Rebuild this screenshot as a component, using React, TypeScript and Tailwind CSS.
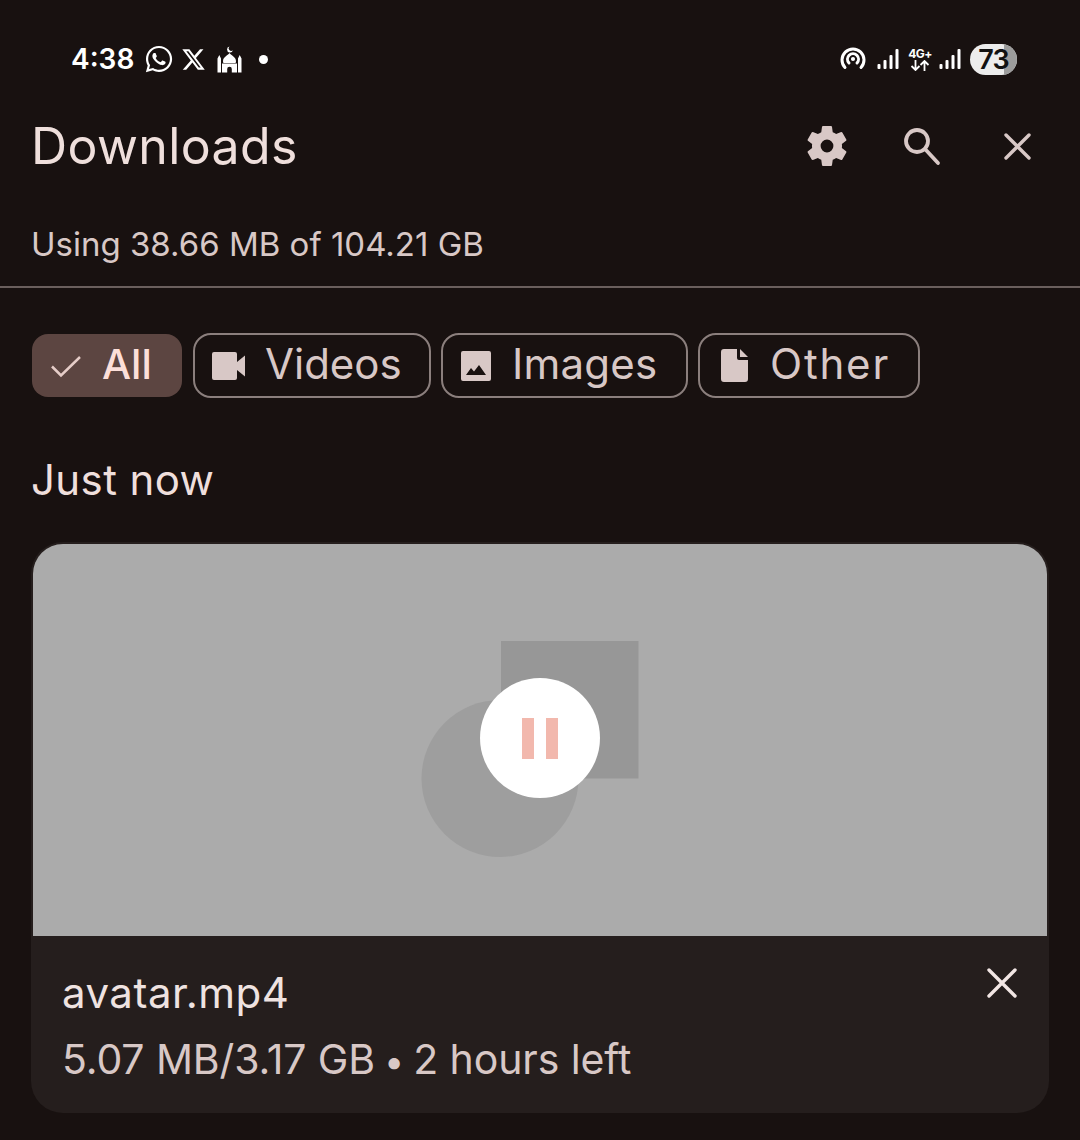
import { FaWhatsapp, FaXTwitter } from "react-icons/fa6";

const GEAR =
  "M19.43 12.98c.04-.32.07-.64.07-.98s-.03-.66-.07-.98l2.11-1.65c.19-.15.24-.42.12-.64l-2-3.46c-.12-.22-.39-.3-.61-.22l-2.49 1c-.52-.4-1.08-.73-1.69-.98l-.38-2.65C14.46 2.18 14.25 2 14 2h-4c-.25 0-.46.18-.49.42l-.38 2.65c-.61.25-1.17.59-1.69.98l-2.49-1c-.23-.09-.49 0-.61.22l-2 3.46c-.13.22-.07.49.12.64l2.11 1.65c-.04.32-.07.65-.07.98s.03.66.07.98l-2.11 1.65c-.19.15-.24.42-.12.64l2 3.46c.12.22.39.3.61.22l2.49-1c.52.4 1.08.73 1.69.98l.38 2.65c.03.24.24.42.49.42h4c.25 0 .46-.18.49-.42l.38-2.65c.61-.25 1.17-.59 1.69-.98l2.49 1c.23.09.49 0 .61-.22l2-3.46c.12-.22.07-.49-.12-.64l-2.11-1.65zM12 15.2a3.2 3.2 0 1 1 0-6.4 3.2 3.2 0 0 1 0 6.4z";

function Signal() {
  return (
    <svg width="22" height="22" viewBox="0 0 22 22" fill="#fff">
      <rect x="0.5" y="16" width="3" height="5" rx="1" />
      <rect x="6.5" y="12" width="3" height="9" rx="1" />
      <rect x="12.5" y="7" width="3" height="14" rx="1" />
      <rect x="18.5" y="1" width="3" height="20" rx="1" />
    </svg>
  );
}

function Mosque() {
  return (
    <svg width="25" height="27" viewBox="0 0 25 27" fill="#fff">
      <path d="M12.500 0.500a3 3 0 1 0 3.400 3.800 2.400 2.400 0 1 1-3.400-3.800z" />
      <path d="M12.500 7c1 2.200 6.500 3.600 6.500 8.200 0 .9-.2 1.500-.5 1.800H6.500c-.3-.3-.5-.9-.5-1.800C6 10.600 11.500 9.200 12.500 7z" />
      <path d="M5 17.500h15V26.500h-5.200v-3.500a2.300 2.300 0 0 0-4.600 0v3.500H5z" />
      <path d="M2.300 9L4 12.500v14H.5v-14zM22.700 9l1.800 3.500v14H21v-14z" />
    </svg>
  );
}

function Hotspot() {
  return (
    <svg width="26" height="26" viewBox="0 0 26 26" fill="none" stroke="#fff" strokeWidth="3" strokeLinecap="round">
      <path d="M5 21.500a11 11 0 1 1 16 0" />
      <path d="M9 17a5.500 5.500 0 1 1 8 0" />
      <circle cx="13" cy="13" r="1.300" fill="#fff" strokeWidth="1.500" />
    </svg>
  );
}

function Arrows() {
  return (
    <svg width="20" height="11" viewBox="0 0 20 11" fill="none" stroke="#fff" strokeWidth="1.800">
      <path d="M5.500 0v10M1.500 6l4 4 4-4" />
      <path d="M14.500 11V1M10.500 5l4-4 4 4" />
    </svg>
  );
}

function Chip({ label, icon, cls, textCls }: { label: string; icon: React.ReactNode; cls: string; textCls: string }) {
  return (
    <div className={`flex h-[65px] items-center rounded-[18px] border-2 border-[#8b7f7d] text-[#d8c8c6] ${cls}`}>
      {icon}
      <span className={`pb-[3px] text-[42px] leading-none ${textCls}`}>{label}</span>
    </div>
  );
}

export default function App() {
  return (
    <div className="flex h-[1140px] w-[1080px] flex-col overflow-hidden bg-[#181110] font-['Inter','Noto_Sans',sans-serif]">
      {/* status bar */}
      <div className="flex h-[118px] items-start justify-between pl-[71px] pr-[63px] pt-[41px] text-white">
        <div className="flex h-[36px] items-center">
          <span className="text-[28px] font-semibold leading-none">4:38</span>
          <FaWhatsapp className="ml-[10px] text-[30px]" />
          <FaXTwitter className="ml-[7px] text-[25px]" />
          <span className="ml-[11px]"><Mosque /></span>
          <span className="ml-[17px] h-[9px] w-[9px] rounded-full bg-white" />
        </div>
        <div className="flex h-[36px] items-center">
          <Hotspot />
          <span className="ml-[11px]"><Signal /></span>
          <div className="ml-[10px] flex w-[22px] flex-col items-center">
            <span className="text-[12px] font-bold leading-[12px] tracking-[-0.5px]">4G+</span>
            <Arrows />
          </div>
          <span className="ml-[8px]"><Signal /></span>
          <div className="relative ml-[9px] flex h-[31px] w-[47px] items-center justify-center overflow-hidden rounded-full bg-[#ececec]">
            <span className="absolute inset-y-0 right-0 w-[13px] bg-[#9c9c9c]" />
            <span className="relative text-[27px] font-semibold leading-none tracking-[-1px] text-[#111]">73</span>
          </div>
        </div>
      </div>

      {/* header */}
      <div className="flex h-[56px] items-center justify-between pl-[31px] pr-[48px]">
        <span className="text-[50px] font-normal leading-none tracking-[0.4px] text-[#efdfdc]">Downloads</span>
        <div className="flex items-center">
          <svg width="48" height="48" viewBox="0 0 24 24" fill="#d8c8c6"><path d={GEAR} /></svg>
          <svg className="ml-[51px]" width="40" height="40" viewBox="0 0 40 40" fill="none" stroke="#d8c8c6" strokeWidth="3.800">
            <circle cx="15" cy="15" r="11" />
            <path d="M23 23L36 37" strokeLinecap="round" />
          </svg>
          <svg className="ml-[60px]" width="30" height="30" viewBox="0 0 30 30" fill="none" stroke="#d8c8c6" strokeWidth="3.400" strokeLinecap="round">
            <path d="M4 4L27 27M27 4L4 27" />
          </svg>
        </div>
      </div>

      {/* usage */}
      <div className="mt-[50px] pl-[31px] text-[33px] leading-[40px] text-[#d8c8c6]">Using 38.66 MB of 104.21 GB</div>
      <div className="mt-[22px] h-[2px] w-full bg-[#6a5f5d]" />

      {/* chips */}
      <div className="mt-[45px] flex items-center gap-[10px] pl-[32px]">
        <div className="mr-[1px] flex h-[63px] w-[150px] items-center rounded-[16px] bg-[#5c4541] pl-[19px] text-[#fcdfd9]">
          <svg width="30" height="24" viewBox="0 0 30 24" fill="none" stroke="#e6cdc8" strokeWidth="2.500">
            <path d="M1 12.500L10 21.500L29 3" />
          </svg>
          <span className="ml-[21px] pb-[2px] text-[41px] font-medium leading-none">All</span>
        </div>
        <Chip
          label="Videos"
          cls="w-[238px] pl-[17px] gap-[19px]"
          textCls=""
          icon={
            <svg width="34" height="28" viewBox="0 0 34 28" fill="#d8c8c6">
              <path d="M2 0h21a2 2 0 0 1 2 2v8l8-6.500v21L25 18v8a2 2 0 0 1-2 2H2a2 2 0 0 1-2-2V2a2 2 0 0 1 2-2z" />
            </svg>
          }
        />
        <Chip
          label="Images"
          cls="w-[247px] pl-[18px] gap-[21px]"
          textCls="tracking-[0.2px]"
          icon={
            <svg width="30" height="30" viewBox="0 0 30 30" fill="#d8c8c6">
              <path d="M2 0h26a2 2 0 0 1 2 2v26a2 2 0 0 1-2 2H2a2 2 0 0 1-2-2V2a2 2 0 0 1 2-2zM5 24h20l-7-10-5 6.500-3-3.500z" fillRule="evenodd" />
            </svg>
          }
        />
        <Chip
          label="Other"
          cls="w-[222px] pl-[21px] gap-[22px]"
          textCls="tracking-[1.800px]"
          icon={
            <svg width="27" height="33" viewBox="0 0 27 33" fill="#d8c8c6">
              <path d="M3 0h13v9a2 2 0 0 0 2 2h9v19a3 3 0 0 1-3 3H3a3 3 0 0 1-3-3V3a3 3 0 0 1 3-3zM19 0l8 8h-8z" />
            </svg>
          }
        />
      </div>

      {/* section */}
      <div className="mt-[58px] pl-[31px] text-[42px] leading-[48px] tracking-[0.4px] text-[#efdfdc]">Just now</div>

      {/* card */}
      <div className="mx-[31px] mt-[38px] flex h-[571px] flex-col overflow-hidden rounded-[32px] bg-[#251e1d]">
        <div className="mx-[2px] mt-[2px] flex h-[392px] items-center justify-center overflow-hidden rounded-t-[30px] bg-[#ababab]">
          <div className="relative h-[392px] w-[1014px]">
            <svg className="absolute inset-0" width="1014" height="392" viewBox="0 0 1014 392">
              <rect x="468" y="97" width="137.500" height="137.500" fill="#979797" />
              <circle cx="467" cy="234.500" r="78.500" fill="#9e9e9e" />
            </svg>
            <div className="absolute left-[447px] top-[134px] flex h-[120px] w-[120px] items-center justify-center gap-[11.500px] rounded-full bg-white">
              <span className="h-[41px] w-[12px] bg-[#f2b8ad]" />
              <span className="h-[41px] w-[12px] bg-[#f2b8ad]" />
            </div>
          </div>
        </div>
        <div className="flex flex-1 justify-between pl-[31px] pr-[32px] pt-[29px]">
          <div className="flex flex-col">
            <span className="text-[42px] leading-[56px] tracking-[0.5px] text-[#efe3e1]">avatar.mp4</span>
            <span className="mt-[10px] text-[41px] leading-[56px] tracking-[-0.1px] text-[#d8c8c6]">
              5.07 MB/3.17 GB<span className="mx-[-1px] text-[36px]"> • </span>2 hours left
            </span>
          </div>
          <svg className="mt-[3px]" width="30" height="30" viewBox="0 0 30 30" fill="none" stroke="#f2e6e4" strokeWidth="3.400" strokeLinecap="round">
            <path d="M2 2L28 28M28 2L2 28" />
          </svg>
        </div>
      </div>
    </div>
  );
}
